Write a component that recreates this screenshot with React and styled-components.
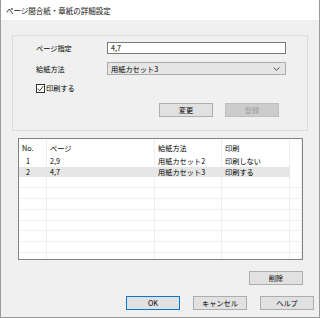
import styled, { createGlobalStyle } from "styled-components";

const GlobalStyle = createGlobalStyle`
  html, body {
    margin: 0;
    padding: 0;
    background: #ffffff;
  }
  * {
    box-sizing: border-box;
  }
`;

const rows = [
  { no: "1", pages: "2,9", tray: "用紙カセット2", print: "印刷しない" },
  { no: "2", pages: "4,7", tray: "用紙カセット3", print: "印刷する", selected: true },
];

const EMPTY_ROWS = 8;

export default function App() {
  return (
    <>
      <GlobalStyle />
      <Window>
        <TitleBar>ページ間合紙・章紙の詳細設定</TitleBar>
        <GroupBox>
          <FieldRow>
            <Label>ページ指定</Label>
            <TextInput>4,7</TextInput>
          </FieldRow>
          <FieldRow tall>
            <Label>給紙方法</Label>
            <Select>
              <span>用紙カセット3</span>
              <svg width="7" height="4" viewBox="0 0 7 4">
                <path d="M0.5 0.5 L3.5 3.3 L6.5 0.5" fill="none" stroke="#444" strokeWidth="0.9" />
              </svg>
            </Select>
          </FieldRow>
          <CheckRow>
            <CheckBox>
              <svg width="7" height="7" viewBox="0 0 7 7">
                <path d="M0.8 3.6 L2.7 5.6 L6.3 1.2" fill="none" stroke="#222" strokeWidth="0.9" />
              </svg>
            </CheckBox>
            <span>印刷する</span>
          </CheckRow>
          <GroupButtons>
            <Button>変更</Button>
            <Button disabled>登録</Button>
          </GroupButtons>
        </GroupBox>

        <ListBox>
          <ListRow header>
            <Cell>No.</Cell>
            <Cell>ページ</Cell>
            <Cell>給紙方法</Cell>
            <Cell>印刷</Cell>
            <Cell />
          </ListRow>
          {rows.map((r) => (
            <ListRow key={r.no}>
              <Cell wide selected={r.selected}>{r.no}</Cell>
              <Cell selected={r.selected}>{r.pages}</Cell>
              <Cell selected={r.selected}>{r.tray}</Cell>
              <Cell selected={r.selected}>{r.print}</Cell>
              <Cell />
            </ListRow>
          ))}
          {Array.from({ length: EMPTY_ROWS }).map((_, i) => (
            <ListRow key={"e" + i} empty>
              <Cell />
              <Cell />
              <Cell />
              <Cell />
              <Cell />
            </ListRow>
          ))}
        </ListBox>

        <DeleteRow>
          <Button>削除</Button>
        </DeleteRow>

        <FooterButtons>
          <Button primary>OK</Button>
          <Button>キャンセル</Button>
          <Button>ヘルプ</Button>
        </FooterButtons>
      </Window>
    </>
  );
}

const font = `"Noto Sans CJK JP", "Noto Sans", sans-serif`;

const Window = styled.div`
  width: 320px;
  height: 318px;
  display: flex;
  flex-direction: column;
  background: #f0f0f0;
  border: 1px solid #9a9a9a;
  border-top: none;
  font-family: ${font};
  font-size: 7.2px;
  color: #000;
  overflow: hidden;
`;

const TitleBar = styled.div`
  height: 20px;
  flex: none;
  background: #ffffff;
  display: flex;
  align-items: center;
  padding-left: 5px;
  font-size: 7.5px;
  color: #111;
`;

const GroupBox = styled.div`
  margin: 15px 0 0 11px;
  width: 296px;
  height: 96px;
  border: 1px solid #dcdcdc;
  padding: 6px 0 0 23px;
  display: flex;
  flex-direction: column;
`;

const FieldRow = styled.div`
  display: flex;
  align-items: center;
  height: ${(p) => (p.tall ? "13px" : "12px")};
  margin-bottom: 8px;
`;

const Label = styled.div`
  width: 71px;
  flex: none;
`;

const TextInput = styled.div`
  width: 179px;
  height: 100%;
  background: #fff;
  border: 1px solid #7a7a7a;
  padding-left: 3px;
  display: flex;
  align-items: center;
`;

const Select = styled.div`
  width: 179px;
  height: 100%;
  background: #e5e5e5;
  border: 1px solid #acacac;
  padding: 0 5px 0 3px;
  display: flex;
  align-items: center;
  justify-content: space-between;
`;

const CheckRow = styled.div`
  display: flex;
  align-items: center;
  height: 10px;
  gap: 1px;
`;

const CheckBox = styled.div`
  width: 9px;
  height: 9px;
  border: 1px solid #333;
  background: #fff;
  display: flex;
  align-items: center;
  justify-content: center;
`;

const GroupButtons = styled.div`
  display: flex;
  gap: 12px;
  margin-top: 10px;
  padding-left: 123px;
`;

const Button = styled.div`
  width: 54px;
  height: 14px;
  flex: none;
  display: flex;
  align-items: center;
  justify-content: center;
  background: ${(p) => (p.disabled ? "#cccccc" : "#e1e1e1")};
  color: ${(p) => (p.disabled ? "#a0a0a0" : "#000")};
  border: ${(p) =>
    p.primary ? "1.5px solid #0078d7" : p.disabled ? "1px solid #bfbfbf" : "1px solid #adadad"};
`;

const ListBox = styled.div`
  margin: 7px 0 0 17px;
  width: 285px;
  height: 122px;
  flex: none;
  background: #fff;
  border: 1px solid #828282;
  overflow: hidden;
`;

const ListRow = styled.div`
  display: grid;
  grid-template-columns: 28px 108px 67px 68px 1fr;
  height: ${(p) => (p.header ? "17px" : p.empty ? "10.9px" : "10.5px")};
  border-bottom: ${(p) => (p.empty ? "1px solid #f0f0f0" : "none")};
`;

const Cell = styled.div`
  display: flex;
  align-items: center;
  padding-left: ${(p) => (p.wide ? "7px" : "3px")};
  background: ${(p) => (p.selected ? "#e6e6e6" : "transparent")};
  border-right: 1px solid ${(p) => (p.selected ? "#e6e6e6" : "#efefef")};
  white-space: nowrap;
  overflow: hidden;
`;

const DeleteRow = styled.div`
  display: flex;
  justify-content: flex-end;
  margin: 11px 16px 0 0;
`;

const FooterButtons = styled.div`
  display: flex;
  justify-content: flex-end;
  gap: 13px;
  margin: 11px 5px 0 0;
`;
